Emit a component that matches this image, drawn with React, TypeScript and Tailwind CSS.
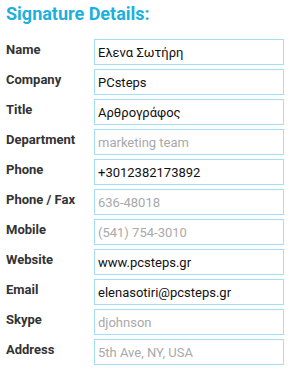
import React from "react";

const rows: { label: string; value?: string; placeholder?: string }[] = [
  { label: "Name", value: "Ελενα Σωτήρη" },
  { label: "Company", value: "PCsteps" },
  { label: "Title", value: "Αρθρογράφος" },
  { label: "Department", placeholder: "marketing team" },
  { label: "Phone", value: "+3012382173892" },
  { label: "Phone / Fax", placeholder: "636-48018" },
  { label: "Mobile", placeholder: "(541) 754-3010" },
  { label: "Website", value: "www.pcsteps.gr" },
  { label: "Email", value: "elenasotiri@pcsteps.gr" },
  { label: "Skype", placeholder: "djohnson" },
  { label: "Address", placeholder: "5th Ave, NY, USA" },
];

export default function App() {
  return (
    <div
      className="w-[291px] h-[370px] bg-white pl-[6px] overflow-hidden"
      style={{ fontFamily: "Roboto, 'Noto Sans', sans-serif" }}
    >
      <h1 className="pt-[2px] text-[18px] font-bold leading-[24px] text-[#1bb0e0]">
        Signature Details:
      </h1>
      <div className="mt-[13px] flex flex-col gap-[4px]">
        {rows.map((r) => (
          <div key={r.label} className="flex h-[26px]">
            <div className="w-[88px] pt-[3px] text-[13px] font-bold leading-[15px] text-[#333333]">
              {r.label}
            </div>
            <input
              readOnly
              defaultValue={r.value}
              placeholder={r.placeholder}
              className="w-[190px] h-[26px] border border-[#a3def4] px-[3px] text-[13px] leading-[15px] text-[#111111] placeholder:text-[#a9a9a9] outline-none bg-white"
              style={{ fontFamily: "Roboto, 'Noto Sans', sans-serif" }}
            />
          </div>
        ))}
      </div>
    </div>
  );
}
